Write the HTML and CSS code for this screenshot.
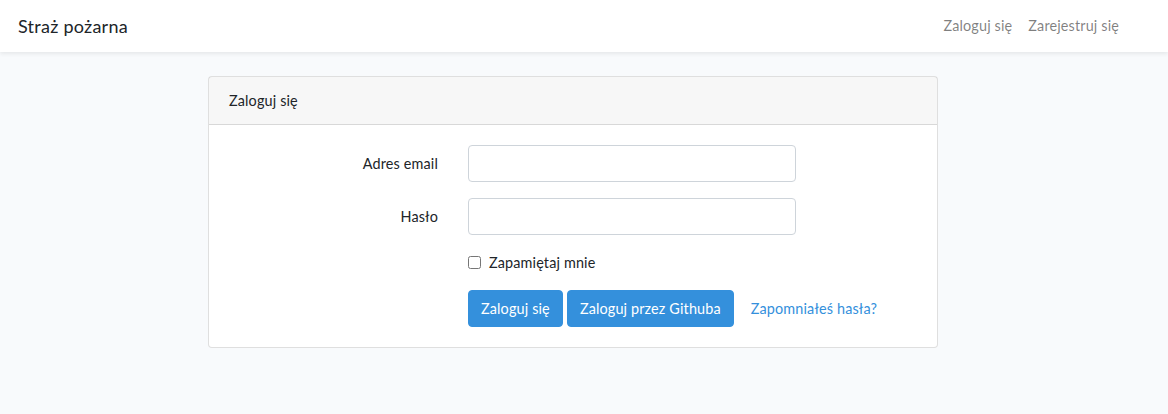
FILE: index.html
```html
<!DOCTYPE html>
<html lang="pl">
<head>
<meta charset="utf-8">
<title>Straż pożarna</title>
<link rel="stylesheet" href="styles.css">
</head>
<body>
<nav class="navbar">
  <a class="brand" href="#">Straż pożarna</a>
  <ul class="nav-links">
    <li><a class="nav-link" href="#">Zaloguj się</a></li>
    <li><a class="nav-link" href="#">Zarejestruj się</a></li>
  </ul>
</nav>
<main class="main">
  <div class="card">
    <div class="card-header">Zaloguj się</div>
    <div class="card-body">
      <form class="form">
        <div class="form-row">
          <label class="col-label" for="email">Adres email</label>
          <div class="col-input"><input id="email" type="email" class="form-control"></div>
        </div>
        <div class="form-row">
          <label class="col-label" for="password">Hasło</label>
          <div class="col-input"><input id="password" type="password" class="form-control"></div>
        </div>
        <div class="form-row">
          <div class="col-label"></div>
          <div class="col-input">
            <label class="check"><input type="checkbox" class="check-input"><span>Zapamiętaj mnie</span></label>
          </div>
        </div>
        <div class="form-row last">
          <div class="col-label"></div>
          <div class="col-actions">
            <button type="button" class="btn">Zaloguj się</button>
            <button type="button" class="btn">Zaloguj przez Githuba</button>
            <a class="btn-link" href="#">Zapomniałeś hasła?</a>
          </div>
        </div>
      </form>
    </div>
  </div>
</main>
</body>
</html>
```

FILE: styles.css
```css
* { box-sizing: border-box; }
html, body { margin: 0; padding: 0; }
body {
  background: #f8fafc;
  font-family: "Lato", "Noto Sans", sans-serif;
  font-size: 14.4px;
  line-height: 1.6;
  letter-spacing: 0.15px;
  color: #212529;
}
a { text-decoration: none; }
.navbar {
  height: 52px;
  background: #fff;
  box-shadow: 0 2px 4px rgba(0,0,0,0.075);
  display: flex;
  align-items: center;
  justify-content: space-between;
  padding: 0 41px 0 18px;
}
.brand {
  font-size: 18px;
  letter-spacing: 0.25px;
  color: #212529;
}
.nav-links {
  list-style: none;
  margin: 0;
  padding: 0;
  display: flex;
}
.nav-link {
  display: block;
  padding: 8px;
  color: rgba(0,0,0,0.5);
}
.main { padding: 24px 0; }
.card {
  width: 730px;
  margin-left: 208px;
  background: #fff;
  border: 1px solid rgba(0,0,0,0.125);
  border-radius: 4px;
}
.card-header {
  padding: 12px 20px;
  background: rgba(0,0,0,0.03);
  border-bottom: 1px solid rgba(0,0,0,0.125);
}
.card-body { padding: 20px; }
.form { margin: 0 -15px; }
.form-row {
  display: flex;
  margin-bottom: 16px;
}
.form-row.last { margin-bottom: 0; }
.col-label {
  width: 239px;
  flex: none;
  padding: 7px 15px;
  text-align: right;
}
.col-input {
  width: 358px;
  flex: none;
  padding: 0 15px;
}
.col-actions {
  flex: none;
  padding: 0 15px;
  display: flex;
  align-items: center;
  gap: 4px;
}
.form-control {
  display: block;
  width: 100%;
  height: 37px;
  padding: 6px 12px;
  border: 1px solid #ced4da;
  border-radius: 4px;
  font: inherit;
  background: #fff;
}
.check {
  display: flex;
  align-items: center;
  gap: 8px;
}
.check-input {
  margin: 0;
  width: 13px;
  height: 13px;
}
.btn {
  font: inherit;
  letter-spacing: inherit;
  color: #fff;
  background: #3490dc;
  border: 1px solid #3490dc;
  border-radius: 4px;
  padding: 6px 12px;
  line-height: 1.6;
}
.btn-link {
  color: #3490dc;
  padding: 6px 12px;
  margin-left: 1px;
}
```
